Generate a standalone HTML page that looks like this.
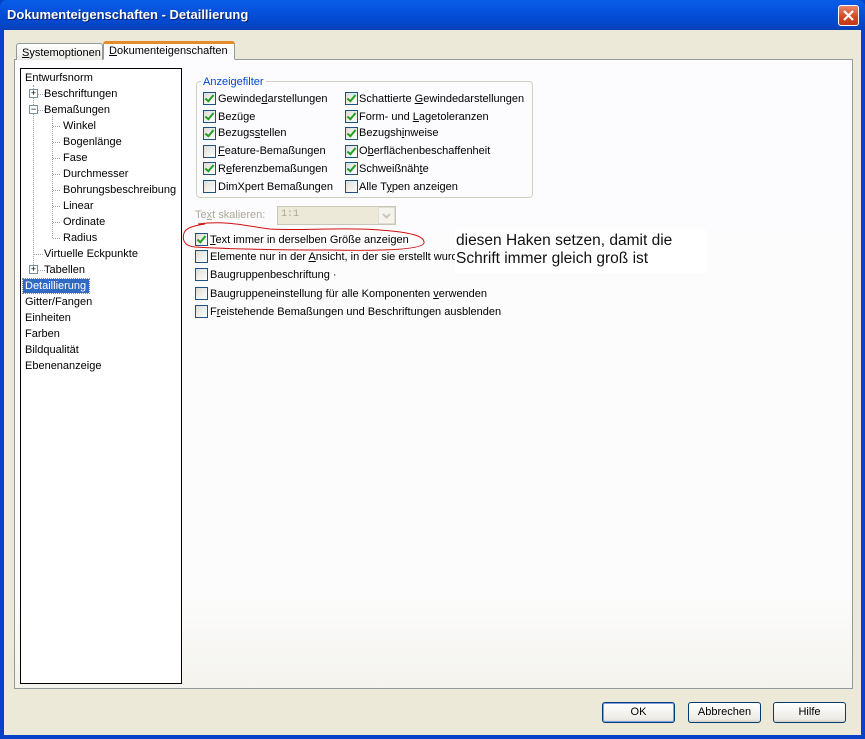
<!DOCTYPE html>
<html><head><meta charset="utf-8"><style>
*{margin:0;padding:0;box-sizing:border-box}
body{width:865px;height:739px;overflow:hidden;font-family:"Liberation Sans","DejaVu Sans",sans-serif;font-size:11px;color:#000;background:#0842c8;position:relative}
.a{position:absolute;white-space:nowrap}
#title{left:0;top:0;width:865px;height:30px;background:linear-gradient(#0a5ee8,#0550dc 40%,#0447c9 80%,#0a3fb5);border-radius:7px 7px 0 0}
#title span{position:absolute;left:7px;top:7px;color:#fff;font-weight:bold;font-size:13px;text-shadow:1px 1px #0a1f6b}
#close{left:838px;top:5px;width:21px;height:21px;border:1px solid #fff;border-radius:3px;background:linear-gradient(#e8866b,#d4461f 60%,#c0391a)}
#body{left:4px;top:30px;width:857px;height:705px;background:#ece9d8}
#panel{left:14px;top:59px;width:839px;height:630px;background:linear-gradient(#fcfcfe,#fcfcfc 85%,#f4f3ee);border:1px solid #919b9c}
.tab{top:41px;height:19px;border:1px solid #919b9c;border-bottom:none;border-radius:3px 3px 0 0;padding:3px 5px 0}
#tree{left:20px;top:68px;width:162px;height:616px;background:#fff;border:1px solid #000}
.t{position:absolute;white-space:nowrap;line-height:14px}
.pb{position:absolute;width:9px;height:9px;border:1px solid #7a8ea6;background:#fff;font-size:9px;line-height:7px;text-align:center}
.dv{position:absolute;border-left:1px dotted #a0a0a0}
.dh{position:absolute;border-top:1px dotted #a0a0a0;width:7px}
.cb{position:absolute;width:13px;height:13px;border:1px solid #1c5180;background:linear-gradient(135deg,#dcdcd7,#fff)}
.cb.c::after{content:"";position:absolute;left:3px;top:0px;width:3px;height:7px;border:solid #21a121;border-width:0 2px 2px 0;transform:rotate(40deg)}
.l{position:absolute;white-space:nowrap;line-height:14px}
#grp{left:196px;top:81px;width:337px;height:117px;border:1px solid #d0d0bf;border-radius:4px}
.btn{position:absolute;top:702px;width:73px;height:21px;border:1px solid #003c74;border-radius:3px;background:linear-gradient(#fff,#ecebe6 85%,#d6d0c5);text-align:center;line-height:19px}
</style></head><body>
<div class="a" id="title"><span>Dokumenteigenschaften - Detaillierung</span></div>
<div class="a" id="close"><svg width="19" height="19"><path d="M5 5L14 14M14 5L5 14" stroke="#fff" stroke-width="2.2"/></svg></div>
<div class="a" id="body"></div>
<div class="a" id="panel"></div>
<div class="a tab" style="left:16px;width:87px;background:linear-gradient(#fff,#ecebe6);top:43px;height:17px"><u>S</u>ystemoptionen</div>
<div class="a tab" style="left:103px;width:132px;height:19px;background:#fcfcfe;border-top:3px solid #e68b2c;padding-top:1px;border-bottom:1px solid #fcfcfe"><u>D</u>okumenteigenschaften</div>

<div class="a" id="tree"></div>
<div class="t" style="left:25px;top:71px">Entwurfsnorm</div>
<div class="dv" style="left:33px;top:85px;height:180px"></div>
<div class="pb" style="left:29px;top:89px">+</div><div class="dh" style="left:38px;top:94px"></div><div class="t" style="left:44px;top:87px">Beschriftungen</div>
<div class="pb" style="left:29px;top:105px">−</div><div class="dh" style="left:38px;top:110px"></div><div class="t" style="left:44px;top:103px">Bemaßungen</div>
<div class="dv" style="left:52px;top:115px;height:123px"></div>
<div class="dh" style="left:53px;top:126px"></div><div class="t" style="left:63px;top:119px">Winkel</div>
<div class="dh" style="left:53px;top:142px"></div><div class="t" style="left:63px;top:135px">Bogenlänge</div>
<div class="dh" style="left:53px;top:158px"></div><div class="t" style="left:63px;top:151px">Fase</div>
<div class="dh" style="left:53px;top:174px"></div><div class="t" style="left:63px;top:167px">Durchmesser</div>
<div class="dh" style="left:53px;top:190px"></div><div class="t" style="left:63px;top:183px">Bohrungsbeschreibung</div>
<div class="dh" style="left:53px;top:206px"></div><div class="t" style="left:63px;top:199px">Linear</div>
<div class="dh" style="left:53px;top:222px"></div><div class="t" style="left:63px;top:215px">Ordinate</div>
<div class="dh" style="left:53px;top:238px"></div><div class="t" style="left:63px;top:231px">Radius</div>
<div class="dh" style="left:34px;top:254px;width:9px"></div><div class="t" style="left:44px;top:247px">Virtuelle Eckpunkte</div>
<div class="pb" style="left:29px;top:265px">+</div><div class="dh" style="left:38px;top:270px"></div><div class="t" style="left:44px;top:263px">Tabellen</div>
<div class="t" style="left:23px;top:279px;width:66px;background:#316ac5;color:#fff;padding-left:2px;outline:1px dotted #888">Detaillierung</div>
<div class="t" style="left:25px;top:295px">Gitter/Fangen</div>
<div class="t" style="left:25px;top:311px">Einheiten</div>
<div class="t" style="left:25px;top:327px">Farben</div>
<div class="t" style="left:25px;top:343px">Bildqualität</div>
<div class="t" style="left:25px;top:359px">Ebenenanzeige</div>

<div class="a" id="grp"></div>
<div class="l" style="left:201px;top:75px;background:#fcfcfe;color:#0046d5;padding:0 2px">Anzeigefilter</div>
<div class="cb c" style="left:203px;top:92px"></div><div class="l" style="left:218px;top:92px">Gewinde<u>d</u>arstellungen</div>
<div class="cb c" style="left:203px;top:110px"></div><div class="l" style="left:218px;top:110px">Bezüge</div>
<div class="cb c" style="left:203px;top:127px"></div><div class="l" style="left:218px;top:126px">Bezugs<u>s</u>tellen</div>
<div class="cb" style="left:203px;top:145px"></div><div class="l" style="left:218px;top:144px"><u>F</u>eature-Bemaßungen</div>
<div class="cb c" style="left:203px;top:162px"></div><div class="l" style="left:218px;top:162px">R<u>e</u>ferenzbemaßungen</div>
<div class="cb" style="left:203px;top:180px"></div><div class="l" style="left:218px;top:180px">DimXpert Bemaßungen</div>
<div class="cb c" style="left:345px;top:92px"></div><div class="l" style="left:359px;top:92px">Schattierte <u>G</u>ewindedarstellungen</div>
<div class="cb c" style="left:345px;top:110px"></div><div class="l" style="left:359px;top:110px">Form- und <u>L</u>agetoleranzen</div>
<div class="cb c" style="left:345px;top:127px"></div><div class="l" style="left:359px;top:126px">Bezugsh<u>i</u>nweise</div>
<div class="cb c" style="left:345px;top:145px"></div><div class="l" style="left:359px;top:144px">O<u>b</u>erflächenbeschaffenheit</div>
<div class="cb c" style="left:345px;top:162px"></div><div class="l" style="left:359px;top:162px">Schweißnäh<u>t</u>e</div>
<div class="cb" style="left:345px;top:180px"></div><div class="l" style="left:359px;top:180px">Alle T<u>y</u>pen anzeigen</div>

<div class="l" style="left:195px;top:208px;color:#aca899">Te<u>x</u>t skalieren:</div>
<div class="a" style="left:277px;top:206px;width:119px;height:19px;border:1px solid #c9c7ba;background:#ece9d8;color:#aca899;padding:2px 3px;font-family:'Liberation Mono',monospace;font-size:10px">1:1</div>
<div class="a" style="left:378px;top:207px;width:17px;height:17px;background:#f4f3ee;border:1px solid #e0ddd0"><svg width="15" height="15"><path d="M4 6l3.5 3.5L11 6" stroke="#c9c7ba" stroke-width="2" fill="none"/></svg></div>

<div class="cb c" style="left:195px;top:233px"></div><div class="l" style="left:210px;top:233px"><u>T</u>ext immer in derselben Größe anzeigen</div>
<div class="cb" style="left:195px;top:250px"></div><div class="l" style="left:210px;top:250px">Elemente nur in der <u>A</u>nsicht, in der sie erstellt wurd</div>
<div class="cb" style="left:195px;top:268px"></div><div class="l" style="left:210px;top:268px">Baugruppenbeschriftung ·</div>
<div class="cb" style="left:195px;top:287px"></div><div class="l" style="left:210px;top:287px">Baugruppeneinstellung für alle Komponenten <u>v</u>erwenden</div>
<div class="cb" style="left:195px;top:305px"></div><div class="l" style="left:210px;top:305px">F<u>r</u>eistehende Bemaßungen und Beschriftungen ausblenden</div>

<div class="a" style="left:455px;top:230px;width:251px;height:43px;background:#fff;font-size:15.5px;line-height:18px;padding:2px 0 0 1px;color:#111">diesen Haken setzen, damit die<br>Schrift immer gleich groß ist</div>
<svg class="a" style="left:0;top:0" width="865" height="739"><path d="M198 224C230 220 250 227 270 229C300 231 340 227 380 230C410 232 425 236 424 243C422 250 380 251 330 250C280 250 230 249 195 247C184 246 182 240 184 233C186 228 192 226 205 224" stroke="#d01010" stroke-width="1" fill="none"/></svg>

<div class="btn" style="left:602px;border-color:#003c74;box-shadow:inset 0 0 0 1px #7ba2e7">OK</div>
<div class="btn" style="left:688px">Abbrechen</div>
<div class="btn" style="left:773px">Hilfe</div>
</body></html>
